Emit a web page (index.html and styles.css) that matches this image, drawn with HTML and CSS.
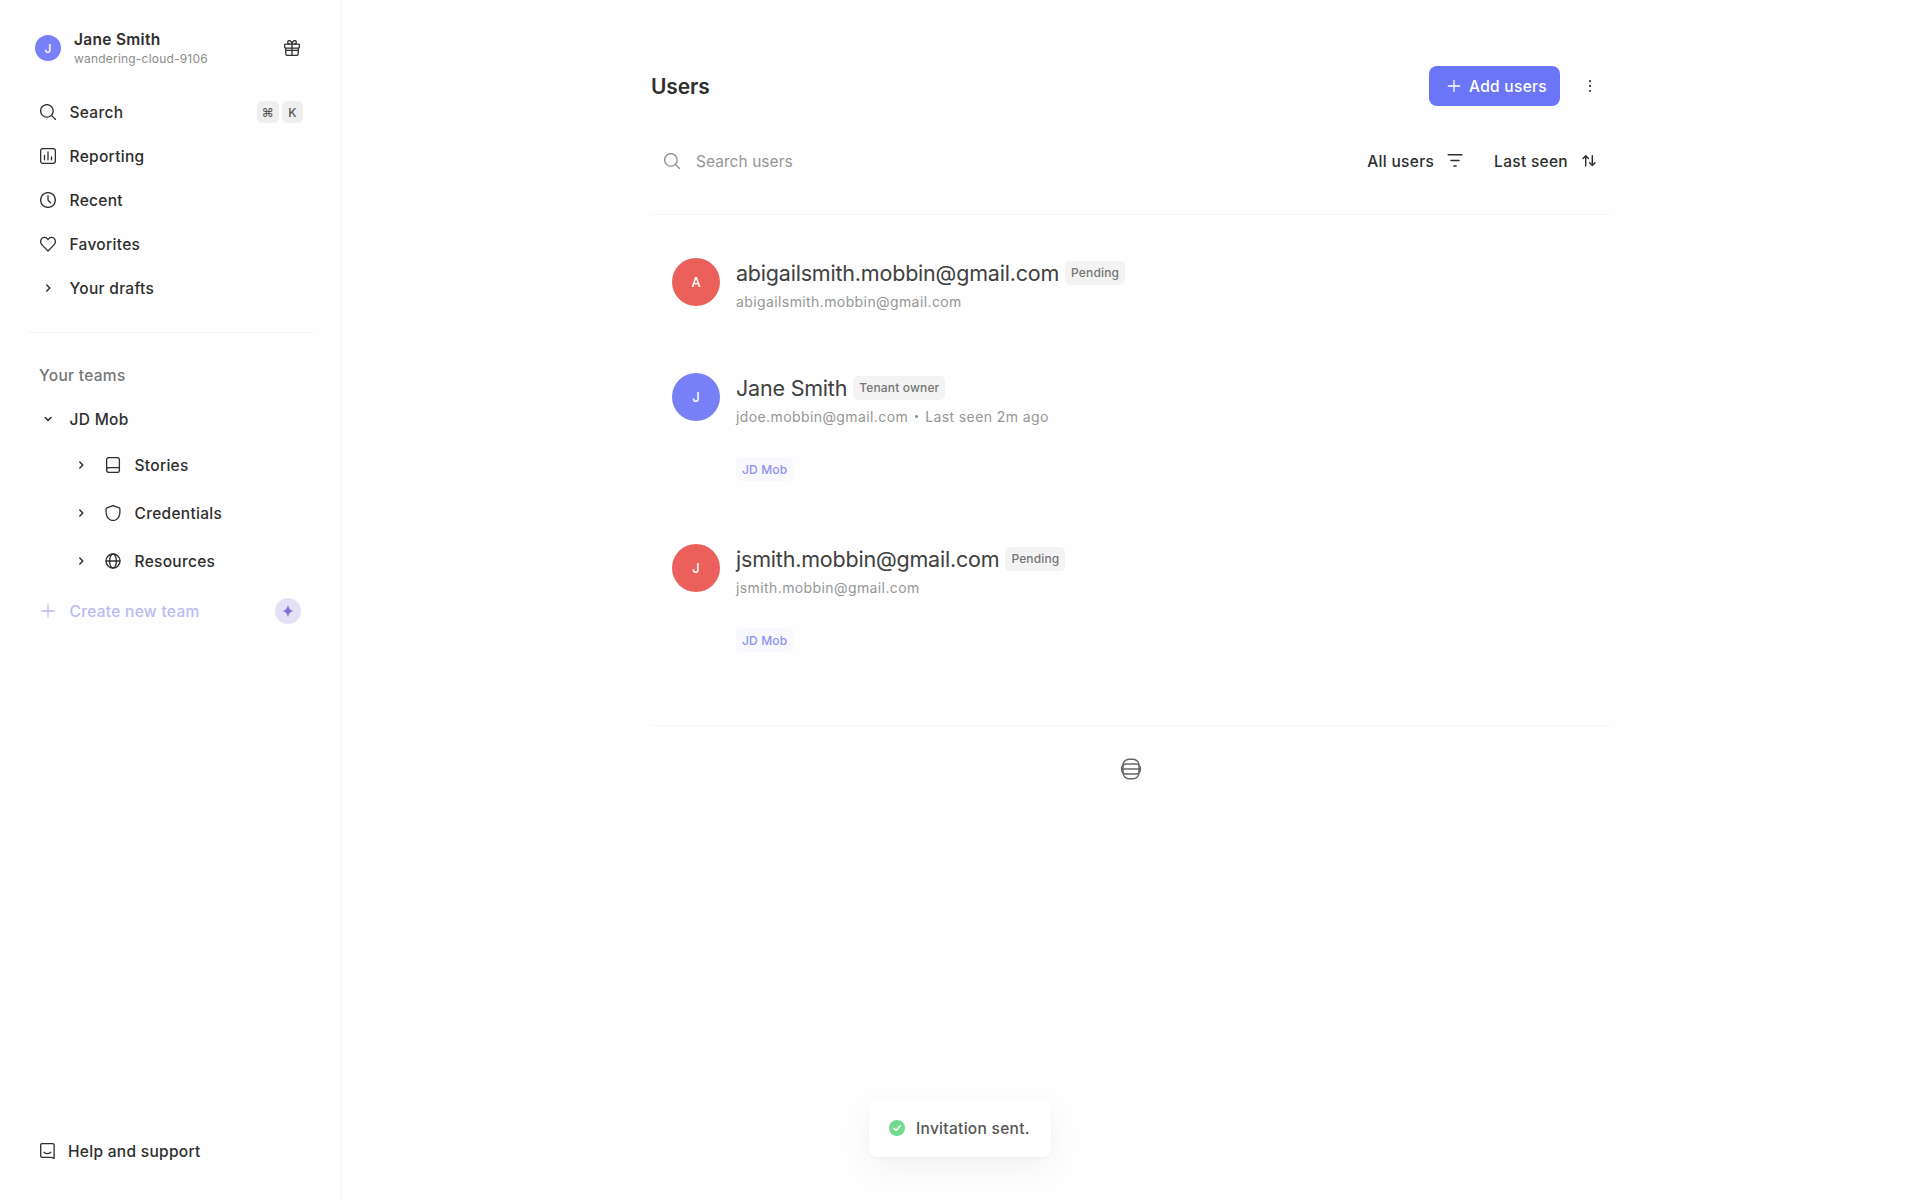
FILE: index.html
```html
<!DOCTYPE html>
<html lang="en">
<head>
    <meta charset="UTF-8">
    <meta name="viewport" content="width=device-width, initial-scale=1.0">
    <title>Users</title>
    <link rel="stylesheet" href="styles.css">
</head>
<body>
    <div class="layout">
        <aside class="sidebar">
            <div class="account">
                <span class="avatar avatar-small">J</span>
                <div class="account-info">
                    <div class="account-name">Jane Smith</div>
                    <div class="account-tenant">wandering-cloud-9106</div>
                </div>
                <svg class="icon" viewBox="0 0 16 16"><rect x="0.6" y="4.2" width="14.8" height="3.9" rx="1.2"/><path d="M1.8 8.1v5.900c0 .8.6 1.400 1.400 1.400h9.600c.8 0 1.400-.6 1.400-1.400V8.100M8 4.200v11.200M1.800 10.300h12.400M8 4.200C7.600 1.800 6.400.6 5.400.6c-1.100 0-1.700.8-1.700 1.700 0 1.200.8 1.900 1.800 1.900M8 4.200C8.400 1.800 9.600.6 10.600.6c1.100 0 1.700.8 1.700 1.700 0 1.200-.8 1.900-1.800 1.900"/></svg>
            </div>

            <nav class="nav">
                <a class="nav-item">
                    <svg class="icon" viewBox="0 0 16 16"><circle cx="6.9" cy="6.9" r="6.3"/><path d="M11.4 11.4l4.200 4.200"/></svg>
                    <span>Search</span>
                    <span class="keys"><kbd>⌘</kbd><kbd>K</kbd></span>
                </a>
                <a class="nav-item">
                    <svg class="icon" viewBox="0 0 16 16"><rect x="0.6" y="0.6" width="14.8" height="14.8" rx="2.4"/><path d="M4.5 7.500v4.300M8 4v7.800M11.500 9v2.800"/></svg>
                    <span>Reporting</span>
                </a>
                <a class="nav-item">
                    <svg class="icon" viewBox="0 0 16 16"><circle cx="8" cy="8" r="7.4"/><path d="M8 3.700V8l2.600 2.900"/></svg>
                    <span>Recent</span>
                </a>
                <a class="nav-item">
                    <svg class="icon" viewBox="0 0 16 16"><path d="M8 15L1.800 8.600C.2 6.900.2 4 1.900 2.400c1.700-1.600 4.400-1.300 5.600.6L8 3.800l.5-.8c1.200-1.900 3.900-2.200 5.600-.6 1.700 1.600 1.700 4.500.1 6.200z"/></svg>
                    <span>Favorites</span>
                </a>
                <a class="nav-item">
                    <svg class="icon chevron" viewBox="0 0 16 16"><path d="M6.800 5L9.800 8l-3 3"/></svg>
                    <span>Your drafts</span>
                </a>
            </nav>

            <div class="teams">
                <div class="teams-title">Your teams</div>
                <a class="nav-item team">
                    <svg class="icon chevron" viewBox="0 0 16 16"><path d="M5.200 6.500L8.100 9.400l2.900-2.900"/></svg>
                    <span>JD Mob</span>
                </a>
                <div class="team-items">
                    <a class="team-item">
                        <svg class="icon chevron" viewBox="0 0 16 16"><path d="M6.800 5L9.800 8l-3 3"/></svg>
                        <svg class="icon" viewBox="0 0 16 16"><path d="M1.600 13.100V2.800C1.600 1.600 2.600.6 3.800.6h8.400c1.200 0 2.200 1 2.200 2.200v10.400c0 1.200-.8 2.200-2 2.200H3.900a2.300 2.300 0 0 1 0-4.700h10.500"/></svg>
                        <span>Stories</span>
                    </a>
                    <a class="team-item">
                        <svg class="icon chevron" viewBox="0 0 16 16"><path d="M6.800 5L9.800 8l-3 3"/></svg>
                        <svg class="icon" viewBox="0 0 16 16"><path d="M8 .6l6.100 2.300c.5.200.8.6.8 1.100v2.800c0 3.500-1.300 6.300-3.500 7.700-2 1.200-4.800 1.200-6.800 0C2.400 13.100 1.100 10.300 1.100 6.800V4c0-.5.3-.9.8-1.100z"/></svg>
                        <span>Credentials</span>
                    </a>
                    <a class="team-item">
                        <svg class="icon chevron" viewBox="0 0 16 16"><path d="M6.800 5L9.800 8l-3 3"/></svg>
                        <svg class="icon" viewBox="0 0 16 16"><circle cx="8" cy="8" r="7"/><ellipse cx="8" cy="8" rx="3.400" ry="7"/><path d="M1 8h14"/></svg>
                        <span>Resources</span>
                    </a>
                </div>
                <a class="nav-item create-team">
                    <svg class="icon" viewBox="0 0 16 16"><path d="M8 2v12M2 8h12"/></svg>
                    <span>Create new team</span>
                    <span class="upgrade">
                        <svg viewBox="0 0 12 12"><path d="M6 0C7 3.500 8 5 11.200 6 8 7 7 8.500 6 12 5 8.500 4 7 .8 6 4 5 5 3.500 6 0z"/></svg>
                    </span>
                </a>
            </div>

            <a class="help">
                <svg class="icon" viewBox="0 0 16 16"><path d="M2.100.6h10.600c.8 0 1.400.6 1.400 1.400v13.400c-1.300-.7-2.600-1-4-1h-8c-.8 0-1.400-.6-1.400-1.400V2C.7 1.200 1.300.6 2.100.6zM4 9.300c2 1.600 4.800 1.600 6.800 0"/></svg>
                <span>Help and support</span>
            </a>
        </aside>

        <main class="main">
            <div class="container">
                <header class="page-header">
                    <h1>Users</h1>
                    <button class="add-button">
                        <svg class="icon" viewBox="0 0 16 16"><path d="M8 2.300v11.400M2.300 8h11.400"/></svg>
                        <span>Add users</span>
                    </button>
                    <svg class="more" viewBox="0 0 16 16"><circle cx="8" cy="3" r="1.100"/><circle cx="8" cy="8" r="1.100"/><circle cx="8" cy="13" r="1.100"/></svg>
                </header>

                <div class="toolbar">
                    <svg class="icon icon-muted" viewBox="0 0 16 16"><circle cx="6.900" cy="6.900" r="6.300"/><path d="M11.400 11.400l4.200 4.200"/></svg>
                    <input class="search-input" type="text" placeholder="Search users">
                    <a class="filter">
                        <span>All users</span>
                        <svg class="icon" viewBox="0 0 16 16"><path d="M1.200 1.800h13.600M4 7.500h8M6.900 13h2.200" stroke-width="1.500"/></svg>
                    </a>
                    <a class="filter">
                        <span>Last seen</span>
                        <svg class="icon" viewBox="0 0 16 16"><path d="M4.700 12.700V3M2 5.500L4.700 2.800l2.700 2.700M11.300 2.800v9.700M8.600 9.800l2.700 2.700L14 9.800" stroke-width="1.400"/></svg>
                    </a>
                </div>

                <div class="user-list">
                    <div class="user">
                        <span class="avatar avatar-red">A</span>
                        <div class="user-info">
                            <div class="user-heading">
                                <span class="user-name">abigailsmith.mobbin@gmail.com</span>
                                <span class="badge">Pending</span>
                            </div>
                            <div class="user-detail">abigailsmith.mobbin@gmail.com</div>
                        </div>
                    </div>
                    <div class="user">
                        <span class="avatar">J</span>
                        <div class="user-info">
                            <div class="user-heading">
                                <span class="user-name">Jane Smith</span>
                                <span class="badge">Tenant owner</span>
                            </div>
                            <div class="user-detail">jdoe.mobbin@gmail.com<span class="dot"></span>Last seen 2m ago</div>
                            <span class="badge badge-team">JD Mob</span>
                        </div>
                    </div>
                    <div class="user">
                        <span class="avatar avatar-red">J</span>
                        <div class="user-info">
                            <div class="user-heading">
                                <span class="user-name">jsmith.mobbin@gmail.com</span>
                                <span class="badge">Pending</span>
                            </div>
                            <div class="user-detail">jsmith.mobbin@gmail.com</div>
                            <span class="badge badge-team">JD Mob</span>
                        </div>
                    </div>
                </div>

                <div class="loader">
                    <svg viewBox="0 0 22 22"><rect x="3" y="1.200" width="16" height="19.600" rx="6"/><rect x="1.600" y="6" width="18.800" height="10" rx="4.500"/><path d="M1.600 11h18.800"/></svg>
                </div>
            </div>
        </main>
    </div>

    <div class="toast">
        <svg viewBox="0 0 16 16"><circle cx="8" cy="8" r="8"/><path d="M4.800 8.300l2.300 2.200 4.200-4.700"/></svg>
        <span>Invitation sent.</span>
    </div>
</body>
</html>
```
FILE: styles.css
```css
* {
    margin: 0;
    padding: 0;
    box-sizing: border-box;
}

body {
    font-family: 'Inter', sans-serif;
    font-size: 15.5px;
    font-weight: 500;
    letter-spacing: 0.3px;
    color: #2e2e2e;
    background: #fefefe;
}

.layout {
    display: flex;
    height: 100vh;
}

.icon {
    width: 16px;
    height: 16px;
    flex-shrink: 0;
    fill: none;
    stroke: #2e2e2e;
    stroke-width: 1.3;
    stroke-linecap: round;
    stroke-linejoin: round;
}

.chevron {
    stroke-width: 1.5;
}

/* Sidebar */
.sidebar {
    width: 342px;
    flex-shrink: 0;
    display: flex;
    flex-direction: column;
    padding: 28px 28px 29px;
    border-right: 1px solid #f5f5f5;
}

.account {
    display: flex;
    align-items: center;
    height: 40px;
    padding: 0 13px 0 7px;
    margin-bottom: 22px;
}

.account-info {
    flex: 1;
    margin-left: 13px;
}

.account-name {
    font-weight: 600;
    line-height: 20px;
}

.account-tenant {
    font-size: 12px;
    font-weight: 400;
    letter-spacing: 0.2px;
    line-height: 17px;
    color: #8c8c8c;
}

.avatar {
    display: flex;
    align-items: center;
    justify-content: center;
    width: 48px;
    height: 48px;
    flex-shrink: 0;
    border-radius: 50%;
    background: #7880f8;
    color: #fff;
    font-size: 13px;
    letter-spacing: 0;
}

.avatar-small {
    width: 26px;
    height: 26px;
    font-size: 12px;
}

.avatar-red {
    background: #eb605b;
}

.nav {
    padding-bottom: 22px;
    border-bottom: 1px solid #f5f5f5;
}

.nav-item {
    display: flex;
    align-items: center;
    gap: 13.5px;
    height: 44px;
    padding: 0 12px;
}

.keys {
    display: flex;
    gap: 3px;
    margin-left: auto;
    margin-right: -2px;
}

.keys kbd {
    display: flex;
    align-items: center;
    justify-content: center;
    width: 21.5px;
    height: 21.5px;
    border-radius: 5px;
    background: #efefef;
    font-family: 'Inter', sans-serif;
    font-size: 12px;
    letter-spacing: 0;
    color: #555;
}

.teams {
    padding-top: 33px;
}

.teams-title {
    padding-left: 11px;
    line-height: 20px;
    color: #757575;
}

.team {
    margin-top: 11px;
}

.team-items {
    padding: 0 12px 0 45px;
}

.team-item {
    display: flex;
    align-items: center;
    height: 48px;
}

.team-item .icon + .icon {
    margin: 0 13.5px 0 16px;
}

.create-team {
    margin-top: 4px;
    color: #bbbcf3;
}

.create-team .icon {
    stroke: #bbbcf3;
}

.upgrade {
    display: flex;
    align-items: center;
    justify-content: center;
    width: 26px;
    height: 26px;
    margin-left: auto;
    border-radius: 50%;
    background: #e4e1f7;
}

.upgrade svg {
    width: 12px;
    height: 12px;
    fill: #7f71d8;
}

.help {
    display: flex;
    align-items: center;
    gap: 12px;
    height: 40px;
    margin-top: auto;
    padding-left: 12px;
}

/* Main */
.main {
    flex: 1;
    display: flex;
    justify-content: center;
}

.container {
    width: 960px;
    padding-top: 66px;
}

.page-header {
    display: flex;
    align-items: center;
    height: 40px;
    padding-right: 13px;
}

.page-header h1 {
    flex: 1;
    font-size: 21px;
    font-weight: 600;
    letter-spacing: -0.1px;
}

.add-button {
    display: flex;
    align-items: center;
    gap: 7px;
    width: 131px;
    height: 40px;
    padding-left: 17px;
    border: none;
    border-radius: 8px;
    background: #6b75f8;
    color: #fff;
    font: inherit;
    letter-spacing: inherit;
    white-space: nowrap;
}

.add-button .icon {
    stroke: #fff;
}

.more {
    width: 16px;
    height: 16px;
    margin-left: 22px;
    fill: #2e2e2e;
}

.toolbar {
    display: flex;
    align-items: center;
    height: 109px;
    padding: 2px 14px 0 13px;
    border-bottom: 1px solid #f5f5f5;
}

.icon-muted {
    stroke: #8c8c8c;
}

.search-input {
    flex: 1;
    margin-left: 16px;
    border: none;
    outline: none;
    background: none;
    font: inherit;
    font-weight: 400;
    letter-spacing: 0.05px;
}

.search-input::placeholder {
    color: #969696;
}

.filter {
    display: flex;
    align-items: center;
    gap: 13px;
    margin-left: 31px;
}

.user-list {
    height: 511px;
    padding: 43px 21px 0;
    border-bottom: 1px solid #f5f5f5;
}

.user {
    display: flex;
    gap: 16px;
    margin-bottom: 60px;
}

.user-heading {
    display: flex;
    align-items: center;
    gap: 6px;
    height: 29px;
}

.user-name {
    font-size: 21.5px;
    font-weight: 400;
    letter-spacing: -0.2px;
    color: #404040;
}

.user-detail {
    display: flex;
    align-items: center;
    height: 24px;
    margin-top: 2px;
    font-size: 14px;
    font-weight: 400;
    letter-spacing: 0.4px;
    color: #969696;
}

.dot {
    width: 3px;
    height: 3px;
    margin: 0 7px;
    border-radius: 50%;
    background: #8c8c8c;
}

.badge {
    display: inline-flex;
    align-items: center;
    height: 24px;
    padding: 0 6px;
    border-radius: 5px;
    background: #f3f3f3;
    font-size: 12px;
    font-weight: 500;
    letter-spacing: 0.15px;
    color: #757575;
}

.badge-team {
    display: flex;
    width: fit-content;
    margin-top: 29px;
    margin-bottom: 3px;
    background: #f8f8fd;
    color: #8d92f0;
}

.loader {
    display: flex;
    justify-content: center;
    padding-top: 32px;
}

.loader svg {
    width: 22px;
    height: 22px;
    fill: none;
    stroke: #666;
    stroke-width: 1.5;
}

/* Toast */
.toast {
    position: absolute;
    left: 50%;
    bottom: 43px;
    transform: translateX(-50%);
    display: flex;
    align-items: center;
    gap: 11px;
    width: 182px;
    height: 58px;
    padding-left: 20px;
    border-radius: 8px;
    background: #fff;
    box-shadow: 0 12px 32px rgba(0, 0, 0, 0.05), 0 1px 4px rgba(0, 0, 0, 0.03);
    color: #555;
    white-space: nowrap;
}

.toast svg {
    width: 16px;
    height: 16px;
    fill: #72d98d;
}

.toast path {
    fill: none;
    stroke: #fff;
    stroke-width: 1.4;
    stroke-linecap: round;
    stroke-linejoin: round;
}
```
